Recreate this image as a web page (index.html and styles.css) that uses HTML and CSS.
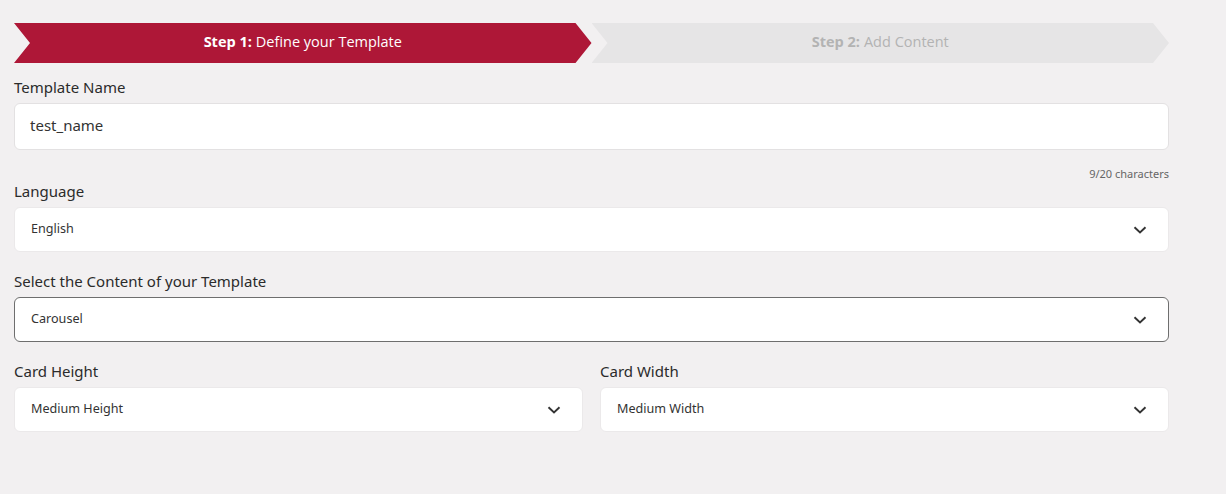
FILE: index.html
```html
<!DOCTYPE html>
<html lang="en">
<head>
  <meta charset="UTF-8">
  <meta name="viewport" content="width=device-width, initial-scale=1.0">
  <title>Create Template</title>
  <link rel="stylesheet" href="styles.css">
</head>
<body>
  <div class="wizard">
    <div class="steps">
      <div class="step active"><b>Step 1:</b> Define your Template</div>
      <div class="step"><b>Step 2:</b> Add Content</div>
    </div>

    <div class="field name">
      <label>Template Name</label>
      <div class="input">test_name</div>
      <div class="counter">9/20 characters</div>
    </div>

    <div class="field">
      <label>Language</label>
      <div class="select">
        <span>English</span>
        <svg class="chev" width="14" height="8" viewBox="0 0 14 8"><path d="M1.5 1.2 7 6.5l5.5-5.3" fill="none" stroke="#333" stroke-width="1.9"/></svg>
      </div>
    </div>

    <div class="field">
      <label>Select the Content of your Template</label>
      <div class="select focused">
        <span>Carousel</span>
        <svg class="chev" width="14" height="8" viewBox="0 0 14 8"><path d="M1.5 1.2 7 6.5l5.5-5.3" fill="none" stroke="#333" stroke-width="1.9"/></svg>
      </div>
    </div>

    <div class="row">
      <div class="field">
        <label>Card Height</label>
        <div class="select">
          <span>Medium Height</span>
          <svg class="chev" width="14" height="8" viewBox="0 0 14 8"><path d="M1.5 1.2 7 6.5l5.5-5.3" fill="none" stroke="#333" stroke-width="1.9"/></svg>
        </div>
      </div>
      <div class="field">
        <label>Card Width</label>
        <div class="select">
          <span>Medium Width</span>
          <svg class="chev" width="14" height="8" viewBox="0 0 14 8"><path d="M1.5 1.2 7 6.5l5.5-5.3" fill="none" stroke="#333" stroke-width="1.9"/></svg>
        </div>
      </div>
    </div>
  </div>
</body>
</html>
```

FILE: styles.css
```css
body { margin: 0; background: #f2f0f1; font-family: "Noto Sans", "Open Sans", sans-serif; color: #333; }
.wizard { width: 1155px; padding: 23px 0 0 14px; }
.steps { display: flex; height: 40px; margin-bottom: 14px; }
.step { flex: 1; display: flex; align-items: center; justify-content: center; gap: 4px; padding-bottom: 3px; box-sizing: border-box; font-family: "Open Sans", sans-serif; font-size: 14.5px; background: #e6e5e6; color: #b3b3b3; clip-path: polygon(0 0, calc(100% - 16px) 0, 100% 50%, calc(100% - 16px) 100%, 0 100%, 16px 50%); }
.step b { font-weight: 700; }
.step.active { background: #ae1737; color: #fff; }
.field { display: flex; flex-direction: column; margin-bottom: 19px; }
.field.name { margin-bottom: 0; }
label { font-size: 15px; line-height: 20px; padding-bottom: 1px; font-weight: 400; color: #2b2b2b; margin-bottom: 5px; }
.input { height: 42px; background: #fff; border: 1px solid #e3e1e2; border-radius: 6px; padding: 0 15px 3px; display: flex; align-items: center; font-size: 15px; }
.counter { align-self: flex-end; font-size: 11px; color: #666; margin-top: 17px; line-height: 14px; }
.select { height: 43px; background: #fff; border: 1px solid #ebe9ea; border-radius: 6px; padding: 0 21px 0 16px; display: flex; align-items: center; justify-content: space-between; font-size: 12.6px; }
.select span { margin-top: -2px; }
.select.focused { border-color: #6e6e6e; }
.row { display: grid; grid-template-columns: 1fr 1fr; gap: 17px; }
```
